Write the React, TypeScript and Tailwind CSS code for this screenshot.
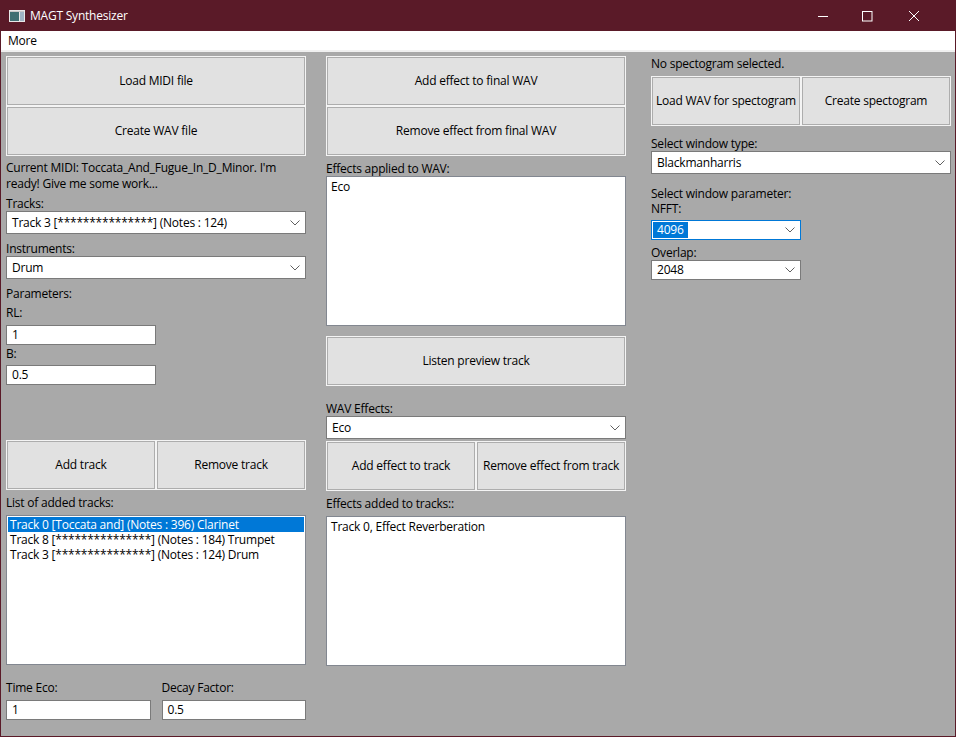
import React from "react";

const Btn = ({ children, className = "" }: { children: React.ReactNode; className?: string }) => (
  <div className={`h-[50px] shrink-0 border border-[#f4f4f4] bg-[#e1e1e1] ${className}`}>
    <div className="flex h-full items-center justify-center border border-[#adadad] text-black whitespace-nowrap">{children}</div>
  </div>
);

const Lbl = ({ children, className = "" }: { children: React.ReactNode; className?: string }) => (
  <div className={`h-[15px] leading-[15px] whitespace-nowrap text-black ${className}`}>{children}</div>
);

const Chevron = () => (
  <svg width="10" height="6" viewBox="0 0 10 6" className="shrink-0" fill="none" stroke="#606060" strokeWidth="1">
    <path d="M0.5 0.5 L5 5 L9.5 0.5" />
  </svg>
);

const Combo = ({ value, className = "" }: { value: string; className?: string }) => (
  <div className={`flex h-[23px] shrink-0 items-center justify-between border border-[#7a7a7a] bg-white pl-[5px] pr-[5px] ${className}`}>
    <span className="whitespace-nowrap text-black">{value}</span>
    <Chevron />
  </div>
);

const Input = ({ value, className = "" }: { value: string; className?: string }) => (
  <div className={`flex h-[20px] shrink-0 items-center border border-[#7a7a7a] bg-white pl-[5px] text-black ${className}`}>{value}</div>
);

const ListBox = ({ children, className = "" }: { children?: React.ReactNode; className?: string }) => (
  <div className={`h-[150px] shrink-0 border border-[#828790] bg-white p-[1px] ${className}`}>{children}</div>
);

const Row = ({ children, active = false }: { children: React.ReactNode; active?: boolean }) => (
  <div className={`h-[15px] pl-[2px] leading-[15px] whitespace-nowrap ${active ? "bg-[#0078d7] text-white" : "text-black"}`}>{children}</div>
);

export default function App() {
  return (
    <div className="flex h-[737px] w-[956px] flex-col overflow-hidden border-x border-b border-[#5a1a28] bg-[#a9a9a9] text-[12px] font-['Open_Sans','Noto_Sans',sans-serif] tracking-[-0.22px]">
      {/* title bar */}
      <div className="-mx-[1px] flex h-[31px] shrink-0 items-center bg-[#5a1a28] pl-[9px] text-white">
        <svg width="16" height="12" viewBox="0 0 16 12" className="shrink-0">
          <rect width="16" height="12" fill="#e8e8e8" />
          <rect x="1" y="2" width="9" height="9" fill="#3f6f72" />
          <rect x="11" y="2" width="4" height="9" fill="#9fb4c4" />
          <rect x="1" y="1" width="14" height="1" fill="#c8c8c8" />
        </svg>
        <span className="ml-[5px] whitespace-nowrap">MAGT Synthesizer</span>
        <svg width="120" height="12" viewBox="0 0 120 12" className="ml-auto mr-[18px] shrink-0" fill="none" stroke="#ffffff" strokeWidth="1">
          <path d="M0 6.5 H10" />
          <rect x="44.5" y="1.5" width="9.5" height="9.5" />
          <path d="M91 1 L101 11 M101 1 L91 11" />
        </svg>
      </div>
      {/* menu */}
      <div className="flex h-[19px] shrink-0 items-center bg-white pl-[7px] text-black">More</div>
      <div className="h-[2px] shrink-0 bg-[#f0f0f0]" />

      {/* content */}
      <div className="flex flex-1 pl-[5px] pt-[4px]">
        {/* column 1 */}
        <div className="flex w-[300px] shrink-0 flex-col">
          <Btn>Load MIDI file</Btn>
          <Btn>Create WAV file</Btn>
          <div className="mt-[4px] leading-[16px] text-black">
            Current MIDI: Toccata_And_Fugue_In_D_Minor. I'm
            <br />
            ready! Give me some work...
          </div>
          <Lbl className="mt-[4px]">Tracks:</Lbl>
          <Combo className="mt-[0px]" value="Track 3 [***************] (Notes : 124)" />
          <Lbl className="mt-[7px]">Instruments:</Lbl>
          <Combo className="mt-[0px]" value="Drum" />
          <Lbl className="mt-[7px]">Parameters:</Lbl>
          <Lbl className="mt-[4px]">RL:</Lbl>
          <Input className="mt-[5px] w-[150px]" value="1" />
          <Lbl className="mt-[1px]">B:</Lbl>
          <Input className="mt-[4px] w-[150px]" value="0.5" />
          <div className="mt-[55px] flex">
            <Btn className="w-[150px]">Add track</Btn>
            <Btn className="w-[150px]">Remove track</Btn>
          </div>
          <Lbl className="mt-[5px]">List of added tracks:</Lbl>
          <ListBox className="mt-[5px]">
            <Row active>Track 0 [Toccata and] (Notes : 396) Clarinet</Row>
            <Row>Track 8 [***************] (Notes : 184) Trumpet</Row>
            <Row>Track 3 [***************] (Notes : 124) Drum</Row>
          </ListBox>
          <div className="mt-[15px] flex gap-[11px]">
            <div className="flex w-[144.5px] flex-col">
              <Lbl>Time Eco:</Lbl>
              <Input className="mt-[5px]" value="1" />
            </div>
            <div className="flex w-[144.5px] flex-col">
              <Lbl>Decay Factor:</Lbl>
              <Input className="mt-[5px]" value="0.5" />
            </div>
          </div>
        </div>

        {/* column 2 */}
        <div className="ml-[20px] flex w-[300px] shrink-0 flex-col">
          <Btn>Add effect to final WAV</Btn>
          <Btn>Remove effect from final WAV</Btn>
          <Lbl className="mt-[5px]">Effects applied to WAV:</Lbl>
          <ListBox className="mt-[0px]">
            <div className="pl-[3px] pt-[1px] leading-[15px] text-black">Eco</div>
          </ListBox>
          <Btn className="mt-[10px]">Listen preview track</Btn>
          <Lbl className="mt-[15px]">WAV Effects:</Lbl>
          <Combo className="mt-[0px]" value="Eco" />
          <div className="mt-[2px] flex">
            <Btn className="w-[150px]">Add effect to track</Btn>
            <Btn className="w-[150px]">Remove effect from track</Btn>
          </div>
          <Lbl className="mt-[5px]">Effects added to tracks::</Lbl>
          <ListBox className="mt-[5px]">
            <div className="pl-[3px] pt-[1px] leading-[15px] text-black">Track 0, Effect Reverberation</div>
          </ListBox>
        </div>

        {/* column 3 */}
        <div className="ml-[25px] flex w-[300px] shrink-0 flex-col">
          <Lbl className="mt-[0px]">No spectogram selected.</Lbl>
          <div className="mt-[5px] flex">
            <Btn className="w-[150px]">Load WAV for spectogram</Btn>
            <Btn className="w-[150px]">Create spectogram</Btn>
          </div>
          <Lbl className="mt-[10px]">Select window type:</Lbl>
          <Combo className="mt-[0px]" value="Blackmanharris" />
          <Lbl className="mt-[12px]">Select window parameter:</Lbl>
          <Lbl>NFFT:</Lbl>
          <div className="mt-[4px] flex h-[20px] w-[150px] shrink-0 items-center justify-between border border-[#0078d7] bg-white pl-[1px] pr-[5px]">
            <span className="bg-[#0078d7] px-[4px] leading-[16px] text-white">4096</span>
            <Chevron />
          </div>
          <Lbl className="mt-[5px]">Overlap:</Lbl>
          <Combo className="!h-[20px] w-[150px]" value="2048" />
        </div>
      </div>
    </div>
  );
}
